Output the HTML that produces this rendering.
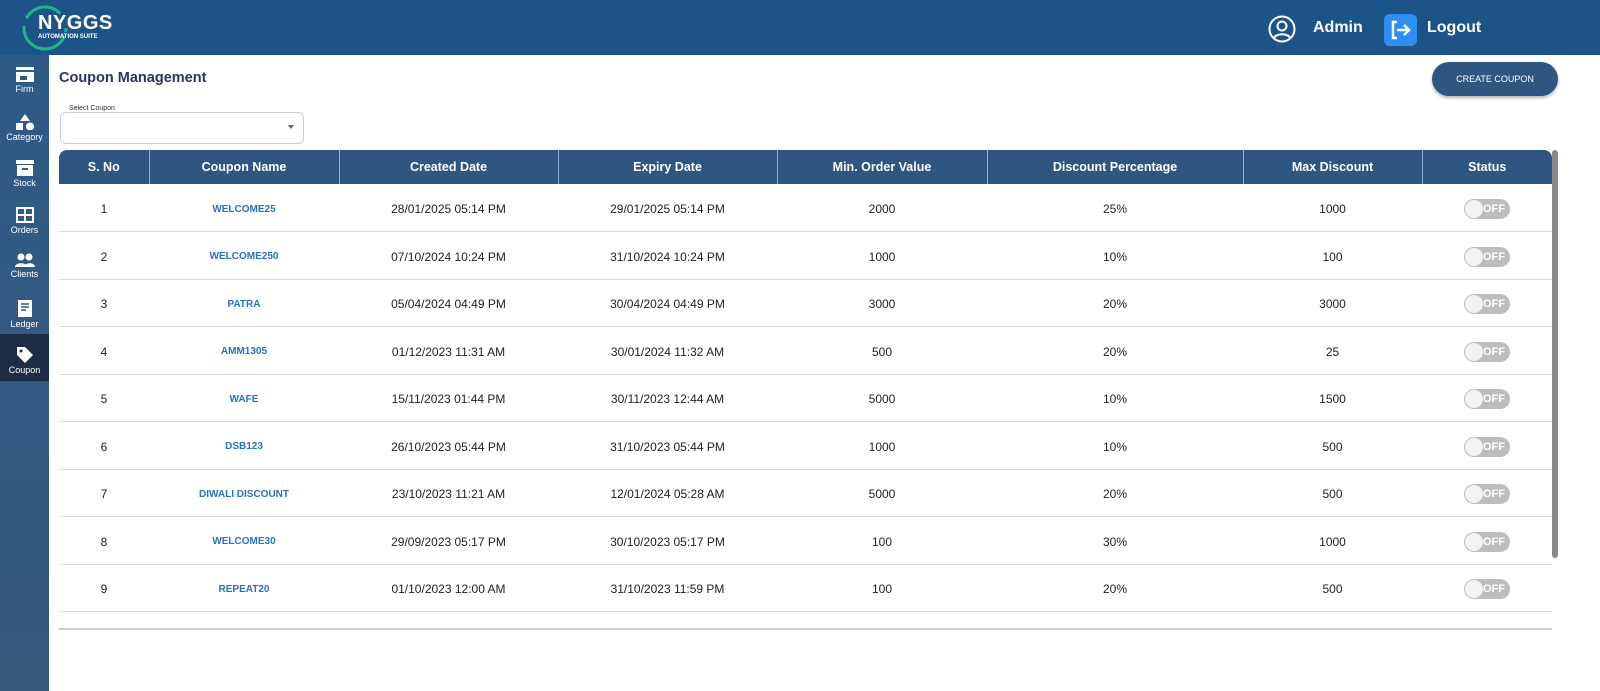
<!DOCTYPE html><html><head><style>
*{margin:0;padding:0;box-sizing:border-box}
body{width:1600px;height:691px;overflow:hidden;font-family:"Liberation Sans",sans-serif;background:#fff;position:relative}
.top{position:absolute;left:0;top:0;width:1600px;height:55px;background:#1d5487}
.side{position:absolute;left:0;top:55px;width:49px;height:636px;background:linear-gradient(#2f5a86,#36597c)}
.nav{height:46.5px;color:#fff;font-size:9px;text-align:center;padding-top:12px}
.nav svg{display:block;margin:0 auto 2px}
.nav.act{background:#1b2c44}
table{position:absolute;left:59px;top:150px;width:1493px;border-collapse:collapse;font-size:12px;color:#222}
th{background:#2f5680;color:#fff;height:34px;font-size:12.5px;border-right:1px solid #8fb0d0}
th:last-child{border-right:none}
td{height:47.5px;text-align:center;border-bottom:1px solid #ddd;padding-top:3px}
td.n{color:#2a72c4;font-weight:bold;font-size:10px}
.tg{display:inline-block;width:46px;height:20px;border-radius:10px;background:#bdbdbd;position:relative;vertical-align:middle}
.tg:before{content:"";position:absolute;left:1px;top:1px;width:18px;height:18px;border-radius:50%;background:#f2f2f2}
.tg span{position:absolute;left:19px;top:4px;color:#fff;font-weight:bold;font-size:11px}
</style></head><body>
<div class="top">
<svg style="position:absolute;left:21px;top:4px" width="48" height="48"><circle cx="24" cy="24" r="21" fill="none" stroke="#22b38a" stroke-width="3" stroke-dasharray="4 4 60 8 40 20"/></svg>
<div style="position:absolute;left:38px;top:12px;color:#fff;font-weight:bold;font-size:20px;letter-spacing:0.5px">NYGGS</div>
<div style="position:absolute;left:38px;top:34px;color:#fff;font-weight:bold;font-size:6px">AUTOMATION SUITE</div>
<svg style="position:absolute;left:1268px;top:15px" width="28" height="28" fill="none" stroke="#fff" stroke-width="2"><circle cx="14" cy="14" r="12.5"/><circle cx="14" cy="11" r="4.5"/><path d="M6 23c2-5 14-5 16 0"/></svg>
<div style="position:absolute;left:1313px;top:19px;color:#fff;font-weight:bold;font-size:16px">Admin</div>
<div style="position:absolute;left:1384px;top:14px;width:33px;height:32px;background:#2f8ef0;border-radius:6px"><svg width="33" height="32" fill="none" stroke="#fff" stroke-width="2.5"><path d="M13 8H9v16h4M13 16h12M20 11l5 5-5 5"/></svg></div>
<div style="position:absolute;left:1427px;top:19px;color:#fff;font-weight:bold;font-size:16px">Logout</div>
</div>
<div class="side">
<div class="nav"><svg width="18" height="15"><rect x="0" y="0" width="18" height="3" fill="#fff"/><rect x="0" y="5" width="18" height="10" fill="#fff"/><rect x="4" y="9" width="7" height="4" fill="#2f5a86"/></svg>Firm</div>
<div class="nav"><svg width="18" height="16"><path d="M9 0l5 7H4z" fill="#fff"/><rect x="0" y="9" width="7" height="7" fill="#fff"/><circle cx="14" cy="12.5" r="4" fill="#fff"/></svg>Category</div>
<div class="nav"><svg width="18" height="16"><rect x="0" y="0" width="18" height="4" fill="#fff"/><path d="M1 5h16v11H1z" fill="#fff"/><rect x="6" y="8" width="6" height="2" fill="#2f5a86"/></svg>Stock</div>
<div class="nav"><svg width="18" height="16" fill="none" stroke="#fff" stroke-width="2"><rect x="1" y="1" width="16" height="14"/><path d="M9 1v14M1 8h16"/></svg>Orders</div>
<div class="nav"><svg width="20" height="14" fill="#fff"><circle cx="6" cy="4" r="3.5"/><circle cx="14" cy="4" r="3.5"/><path d="M0 14c0-5 12-5 12 0zM9 14c1-5 11-5 11 0z"/></svg>Clients</div>
<div class="nav"><svg width="16" height="17"><rect x="1" y="0" width="14" height="17" fill="#fff"/><path d="M4 4h8M4 7h8M4 10h5" stroke="#2f5a86" stroke-width="1.5"/></svg>Ledger</div>
<div class="nav act"><svg width="18" height="17"><path d="M1 1h8l8 8-8 8-8-8z" fill="#fff"/><circle cx="5" cy="5" r="1.5" fill="#1b2c44"/></svg>Coupon</div>
</div>
<div style="position:absolute;left:59px;top:70px;font-weight:bold;font-size:14.5px;color:#2a3268">Coupon Management</div>
<div style="position:absolute;left:1432px;top:62px;width:126px;height:34px;border-radius:17px;background:#2f5680;color:#fff;font-size:9px;text-align:center;line-height:34px;box-shadow:0 2px 3px rgba(0,0,0,.3)">CREATE COUPON</div>
<div style="position:absolute;left:60px;top:112px;width:244px;height:32px;border:1px solid #ccc;border-radius:6px"></div>
<div style="position:absolute;left:66px;top:105px;background:#fff;padding:0 3px;font-size:7px;color:#333">Select Coupon</div>
<div style="position:absolute;left:288px;top:125px;border:3px solid transparent;border-top:4px solid #666"></div>
<table><tr><th style="width:90px;border-radius:8px 0 0 0">S. No</th><th style="width:190px">Coupon Name</th><th style="width:219px">Created Date</th><th style="width:219px">Expiry Date</th><th style="width:210px">Min. Order Value</th><th style="width:256px">Discount Percentage</th><th style="width:179px">Max Discount</th><th style="border-radius:0 8px 0 0">Status</th></tr>
<tr><td>1</td><td class="n">WELCOME25</td><td>28/01/2025 05:14 PM</td><td>29/01/2025 05:14 PM</td><td>2000</td><td>25%</td><td>1000</td><td><span class="tg"><span>OFF</span></span></td></tr>
<tr><td>2</td><td class="n">WELCOME250</td><td>07/10/2024 10:24 PM</td><td>31/10/2024 10:24 PM</td><td>1000</td><td>10%</td><td>100</td><td><span class="tg"><span>OFF</span></span></td></tr>
<tr><td>3</td><td class="n">PATRA</td><td>05/04/2024 04:49 PM</td><td>30/04/2024 04:49 PM</td><td>3000</td><td>20%</td><td>3000</td><td><span class="tg"><span>OFF</span></span></td></tr>
<tr><td>4</td><td class="n">AMM1305</td><td>01/12/2023 11:31 AM</td><td>30/01/2024 11:32 AM</td><td>500</td><td>20%</td><td>25</td><td><span class="tg"><span>OFF</span></span></td></tr>
<tr><td>5</td><td class="n">WAFE</td><td>15/11/2023 01:44 PM</td><td>30/11/2023 12:44 AM</td><td>5000</td><td>10%</td><td>1500</td><td><span class="tg"><span>OFF</span></span></td></tr>
<tr><td>6</td><td class="n">DSB123</td><td>26/10/2023 05:44 PM</td><td>31/10/2023 05:44 PM</td><td>1000</td><td>10%</td><td>500</td><td><span class="tg"><span>OFF</span></span></td></tr>
<tr><td>7</td><td class="n">DIWALI DISCOUNT</td><td>23/10/2023 11:21 AM</td><td>12/01/2024 05:28 AM</td><td>5000</td><td>20%</td><td>500</td><td><span class="tg"><span>OFF</span></span></td></tr>
<tr><td>8</td><td class="n">WELCOME30</td><td>29/09/2023 05:17 PM</td><td>30/10/2023 05:17 PM</td><td>100</td><td>30%</td><td>1000</td><td><span class="tg"><span>OFF</span></span></td></tr>
<tr><td>9</td><td class="n">REPEAT20</td><td>01/10/2023 12:00 AM</td><td>31/10/2023 11:59 PM</td><td>100</td><td>20%</td><td>500</td><td><span class="tg"><span>OFF</span></span></td></tr>
<tr><td colspan="8" style="height:17px;border-bottom:2px solid #ccc"></td></tr>
</table>
<div style="position:absolute;left:1552px;top:150px;width:6px;height:408px;background:#888;border-radius:3px"></div>
</body></html>
